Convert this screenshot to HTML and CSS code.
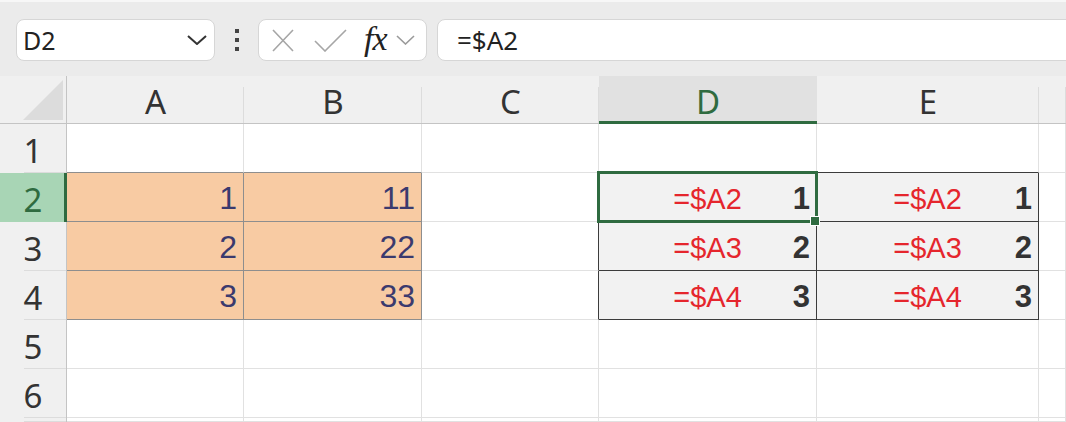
FILE: index.html
```html
<!DOCTYPE html>
<html lang="en">
<head>
    <meta charset="UTF-8">
    <title>Sheet - mixed reference</title>
    <link rel="stylesheet" href="styles.css">
</head>
<body>
    <div class="formula-bar">
        <div class="name-box">
            <span>D2</span>
            <svg class="chev" width="20" height="10" viewBox="0 0 20 10"><path d="M1 1 L10 9 L19 1" fill="none" stroke="#333" stroke-width="2"/></svg>
        </div>
        <div class="dots"><i></i><i></i><i></i></div>
        <div class="fx-box">
            <svg class="icon-x" width="22" height="23" viewBox="0 0 22 23"><path d="M1 1 L21 22 M21 1 L1 22" stroke="#a6a6a6" stroke-width="1.6" fill="none"/></svg>
            <svg class="icon-check" width="33" height="23" viewBox="0 0 33 23"><path d="M1 12 L11 22 L32 1" stroke="#a6a6a6" stroke-width="1.6" fill="none"/></svg>
            <span class="fx">fx</span>
            <svg class="chev-small" width="19" height="10" viewBox="0 0 19 10"><path d="M1 1 L9.5 9 L18 1" fill="none" stroke="#9a9a9a" stroke-width="1.6"/></svg>
        </div>
        <div class="formula-input">=$A2</div>
    </div>

    <div class="sheet">
        <div class="corner"><svg width="41" height="41" viewBox="0 0 41 41"><polygon points="0,40 40,0 40,40" fill="#dcdcdc"/></svg></div>
        <div class="col-head">A</div>
        <div class="col-head">B</div>
        <div class="col-head">C</div>
        <div class="col-head active">D</div>
        <div class="col-head">E</div>
        <div class="col-head"></div>

        <div class="row-head">1</div>
        <div class="cell edge-o"></div>
        <div class="cell edge-o"></div>
        <div class="cell"></div>
        <div class="cell edge-d"></div>
        <div class="cell edge-d"></div>
        <div class="cell"></div>

        <div class="row-head active">2</div>
        <div class="cell peach">1</div>
        <div class="cell peach">11</div>
        <div class="cell side-d"></div>
        <div class="cell calc selected"><span class="ref">=$A2</span><b>1</b><i class="handle"></i></div>
        <div class="cell calc"><span class="ref">=$A2</span><b>1</b></div>
        <div class="cell"></div>

        <div class="row-head">3</div>
        <div class="cell peach">2</div>
        <div class="cell peach">22</div>
        <div class="cell side-d"></div>
        <div class="cell calc"><span class="ref">=$A3</span><b>2</b></div>
        <div class="cell calc"><span class="ref">=$A3</span><b>2</b></div>
        <div class="cell"></div>

        <div class="row-head">4</div>
        <div class="cell peach">3</div>
        <div class="cell peach">33</div>
        <div class="cell side-d"></div>
        <div class="cell calc"><span class="ref">=$A4</span><b>3</b></div>
        <div class="cell calc"><span class="ref">=$A4</span><b>3</b></div>
        <div class="cell"></div>

        <div class="row-head">5</div>
        <div class="cell"></div>
        <div class="cell"></div>
        <div class="cell"></div>
        <div class="cell"></div>
        <div class="cell"></div>
        <div class="cell"></div>

        <div class="row-head">6</div>
        <div class="cell"></div>
        <div class="cell"></div>
        <div class="cell"></div>
        <div class="cell"></div>
        <div class="cell"></div>
        <div class="cell"></div>

        <div class="row-head"></div>
        <div class="cell"></div>
        <div class="cell"></div>
        <div class="cell"></div>
        <div class="cell"></div>
        <div class="cell"></div>
        <div class="cell"></div>
    </div>
</body>
</html>
```

FILE: styles.css
```css
body {
    margin: 0;
    width: 1066px;
    height: 422px;
    overflow: hidden;
    background: #ebebeb;
    font-family: "Noto Sans", sans-serif;
    border-top: 2px solid #f7f7f7;
    box-sizing: border-box;
}

/* formula bar */

.formula-bar {
    display: flex;
    align-items: flex-start;
    height: 74px;
    padding: 17px 0 0 16px;
    box-sizing: border-box;
    overflow: hidden;
}

.formula-bar > * {
    flex-shrink: 0;
}

.name-box,
.fx-box,
.formula-input {
    height: 42px;
    box-sizing: border-box;
    border: 1px solid #d6d6d6;
    border-radius: 8px;
    background: #fff;
    display: flex;
    align-items: center;
}

.name-box {
    width: 199px;
    justify-content: space-between;
    padding: 0 7px 0 6px;
    font-size: 25px;
    color: #222;
}

.dots {
    width: 43px;
    height: 42px;
    display: flex;
    flex-direction: column;
    align-items: center;
    justify-content: center;
    gap: 5px;
}

.dots i {
    width: 4px;
    height: 4px;
    background: #444;
}

.fx-box {
    width: 169px;
    padding-left: 13px;
}

.icon-check {
    margin-left: 20px;
}

.fx {
    margin-left: 17px;
    font-family: "Liberation Serif", serif;
    font-style: italic;
    font-size: 34px;
    color: #222;
    line-height: 1;
    margin-top: -3px;
    letter-spacing: -1px;
}

.chev-small {
    margin-left: 9px;
}

.formula-input {
    width: 660px;
    margin-left: 10px;
    padding-left: 19px;
    font-size: 26px;
    color: #222;
}

/* sheet grid */

.sheet {
    display: grid;
    grid-template-columns: 67px 177px 178px 177px 218px 222px 1fr;
    grid-template-rows: 48px repeat(6, 49px) 4px;
}

.corner {
    background: #f0f0f0;
    border-right: 1px solid #c4c4c4;
    border-bottom: 1px solid #c4c4c4;
    display: flex;
    align-items: flex-end;
    justify-content: flex-end;
    padding: 0 2px 2px 0;
    box-sizing: border-box;
}

.corner svg {
    display: block;
}

.col-head {
    background: linear-gradient(#dcdcdc, #dcdcdc) no-repeat right bottom / 1px 36px, #f0f0f0;
    border-bottom: 1px solid #c4c4c4;
    display: flex;
    align-items: center;
    justify-content: center;
    padding-top: 4px;
    box-sizing: border-box;
    font-size: 33px;
    color: #333;
    line-height: 1;
}

.col-head.active {
    background: #e1e1e1;
    border-bottom: 3px solid #2f6b40;
    color: #2f6b40;
    padding-top: 6px;
}

.row-head {
    background: linear-gradient(#dcdcdc, #dcdcdc) no-repeat right bottom / 42px 1px, #f0f0f0;
    border-right: 1px solid #c4c4c4;
    display: flex;
    align-items: center;
    justify-content: center;
    box-sizing: border-box;
    font-size: 33px;
    color: #333;
    line-height: 1;
    padding-top: 4px;
}

.row-head.active {
    background: #a8d5b5;
    border-right: 3px solid #2f6b40;
    color: #2f6b40;
    padding-left: 2px;
}

.cell {
    background: #fff;
    border-right: 1px solid #e1e1e1;
    border-bottom: 1px solid #e1e1e1;
    box-sizing: border-box;
}

.edge-o {
    border-bottom-color: #8e8e8e;
}

.edge-d {
    border-bottom-color: #3c3c3c;
}

.side-d {
    border-right-color: #3c3c3c;
}

.peach {
    background: #f8cba3;
    border-color: #8e8e8e;
    display: flex;
    align-items: flex-end;
    justify-content: flex-end;
    padding: 0 6px 7px 0;
    font-family: "Liberation Sans", Arial, sans-serif;
    font-size: 32px;
    line-height: 1;
    color: #3b3a6e;
}

.calc {
    background: #f2f2f2;
    border-color: #3c3c3c;
    display: grid;
    grid-template-columns: 1fr auto 1fr;
    align-items: end;
    padding: 0 6px 7px 0;
    font-family: "Liberation Sans", Arial, sans-serif;
    line-height: 1;
}

.calc .ref {
    grid-column: 2;
    font-size: 29px;
    color: #e5262d;
    padding-left: 6px;
}

.calc b {
    grid-column: 3;
    justify-self: end;
    font-size: 31px;
    color: #333;
}

.selected {
    position: relative;
}

.selected::after {
    content: "";
    position: absolute;
    top: -2px;
    left: -2px;
    right: -2px;
    bottom: -2px;
    border: 3px solid #2f6b40;
    pointer-events: none;
}

.handle {
    position: absolute;
    right: -4px;
    bottom: -5px;
    width: 8px;
    height: 8px;
    background: #2f6b40;
    border: 1px solid #fff;
    z-index: 2;
}
```
